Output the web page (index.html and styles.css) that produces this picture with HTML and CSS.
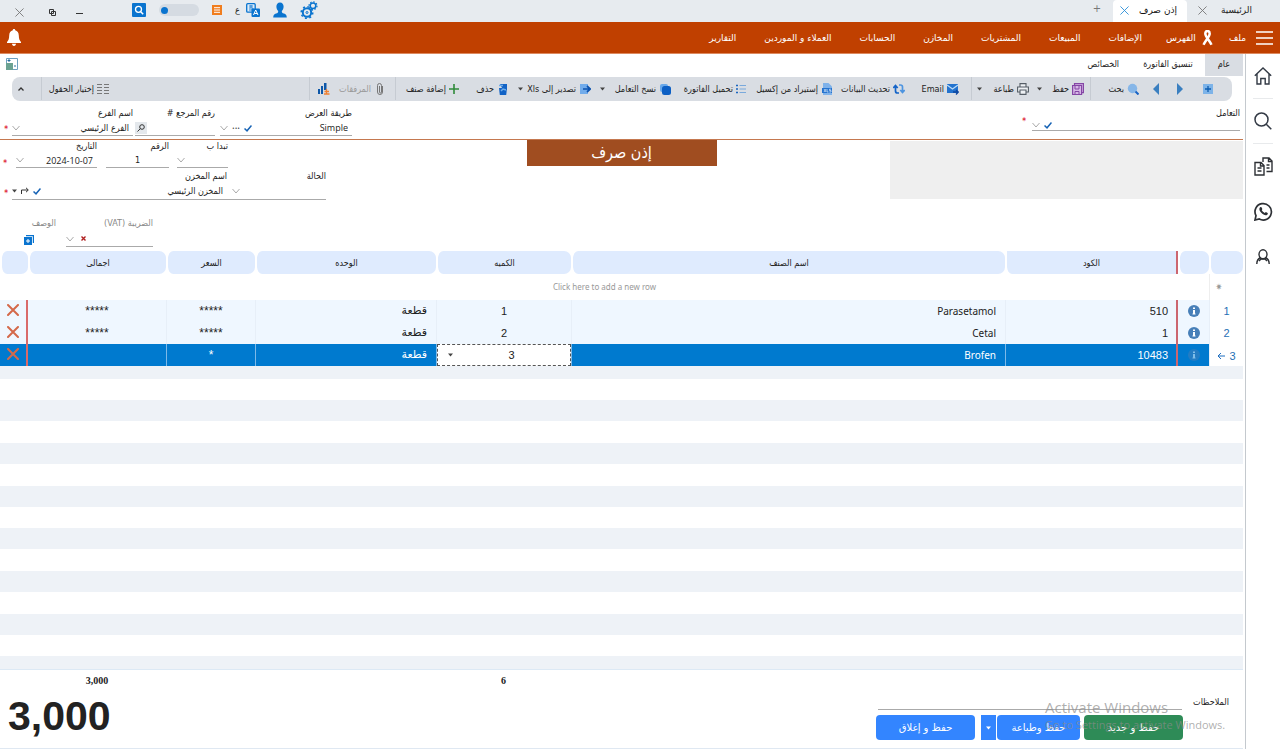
FILE: index.html
```html
<!DOCTYPE html>
<html lang="ar" dir="rtl">
<head>
<meta charset="utf-8">
<title>إذن صرف</title>
<link rel="stylesheet" href="styles.css">
</head>
<body>
<svg class="defs" aria-hidden="true">
  <symbol id="chev" viewBox="0 0 8 8"><path d="M.5 2 4 6l3.500-4" fill="none" stroke="#aaa"/></symbol>
  <symbol id="check" viewBox="0 0 8 8"><path d="M.5 4.500 3 6.800 7.500 1.500" fill="none" stroke="#1763b5" stroke-width="1.500"/></symbol>
  <symbol id="caret" viewBox="0 0 5 4"><path d="M0 .5h5L2.500 3.500z" fill="#444"/></symbol>
  <symbol id="x" viewBox="0 0 10 10"><path d="m.5.5 9 9m0-9-9 9" fill="none" stroke="currentColor"/></symbol>
  <symbol id="xbold" viewBox="0 0 5 5"><path d="m.5.5 4 4m0-4-4 4" fill="none" stroke="#b02020" stroke-width="1.400"/></symbol>
  <symbol id="del" viewBox="0 0 12 12"><path d="m1 1 10 10M11 1 1 11" fill="none" stroke="#d4694a" stroke-width="2" stroke-linecap="round"/></symbol>
  <symbol id="info" viewBox="0 0 12 12"><circle cx="6" cy="6" r="6" fill="currentColor"/><path d="M5 5h2v4H5zM5 2.500h2V4H5zM4.500 8.500h3v1h-3z" fill="#fff"/></symbol>
</svg>

<header class="titlebar">
  <nav class="doc-tabs">
    <div class="doc-tab"><span>الرئيسية</span><button class="plain gray" aria-label="إغلاق"><svg class="i9"><use href="#x"/></svg></button></div>
    <div class="doc-tab active"><span>إذن صرف</span><button class="plain blue" aria-label="إغلاق"><svg class="i9"><use href="#x"/></svg></button></div>
    <button class="plain new-tab" aria-label="جديد">+</button>
  </nav>
  <div class="title-tools">
    <button class="plain" aria-label="الإعدادات"><svg width="18" height="18" viewBox="0 0 18 18"><g fill="none" stroke="#0a74cf"><circle cx="7" cy="11.500" r="4.200" stroke-width="2"/><circle cx="7" cy="11.500" r="5.800" stroke-width="1.500" stroke-dasharray="2 2.500"/><circle cx="7" cy="11.500" r="1" /><circle cx="13" cy="4.800" r="2.800" stroke-width="1.500"/><circle cx="13" cy="4.800" r="4" stroke-width="1.200" stroke-dasharray="1.500 1.600"/></g></svg></button>
    <button class="plain" aria-label="المستخدم"><svg width="14" height="16" viewBox="0 0 14 16"><path d="M7 .5c2.300 0 3.600 1.700 3.600 4 0 2-.9 3.600-1.800 4.400 0 1.800.5 2.100 2.200 2.700 1.700.6 2.600 1.300 2.800 3.900H.2c.2-2.600 1.100-3.300 2.800-3.900 1.700-.6 2.200-.9 2.200-2.700C4.300 8.100 3.400 6.500 3.400 4.500c0-2.300 1.300-4 3.600-4z" fill="#0a74cf"/></svg></button>
    <button class="plain lang" aria-label="اللغة"><svg width="14" height="14" viewBox="0 0 14 14"><rect x=".7" y=".7" width="8.500" height="8.500" rx="1" fill="#dcebf8" stroke="#0a74cf" stroke-width="1.300"/><path d="M3 3h4M3 5h4v2H3M5 2v3" stroke="#0a74cf" stroke-width=".8" fill="none"/><rect x="5.500" y="5.500" width="8.500" height="8.500" rx="1" fill="#0a74cf"/><path d="m7.500 12 2.200-5 2.300 5M8.300 10.500h3" stroke="#fff" fill="none"/></svg><span>ع</span></button>
    <button class="plain" aria-label="قائمة"><svg width="10" height="10" viewBox="0 0 10 10"><path d="M0 0h10v10H0z" fill="#f07d1e"/><path d="M2 2.700h6M2 5h6M2 7.300h6" stroke="#fff"/></svg></button>
    <label class="toggle"><input type="checkbox" aria-label="الوضع"></label>
    <button class="plain" aria-label="بحث"><svg width="14" height="14" viewBox="0 0 14 14"><rect width="14" height="14" rx="1" fill="#0a74cf"/><circle cx="6.500" cy="6.300" r="3" fill="none" stroke="#fff" stroke-width="1.300"/><path d="m8.700 8.700 2.500 2.500" stroke="#fff" stroke-width="1.500"/></svg></button>
  </div>
  <div class="window-tools">
    <button class="plain" aria-label="تصغير"><svg width="7" height="9" viewBox="0 0 7 9"><path d="M0 5.500h7" stroke="#333"/></svg></button>
    <button class="plain" aria-label="استعادة"><svg width="7" height="7" viewBox="0 0 7 7"><path d="M.5.500h4v4h-4zM2.500 2.500h4v4h-4z" stroke="#333" fill="#e7ebef"/></svg></button>
    <button class="plain gray" aria-label="إغلاق"><svg class="i9"><use href="#x"/></svg></button>
  </div>
</header>

<nav class="menu">
  <button class="plain burger" aria-label="القائمة"><svg width="17" height="14" viewBox="0 0 17 14"><path d="M0 1h17M0 7h17M0 13h17" stroke="#fff" stroke-width="1.500"/></svg></button>
  <a href="#">ملف</a>
  <a href="#" class="with-icon"><svg width="13" height="16" viewBox="0 0 13 16"><path d="M4.300 3.800C4.300 1.800 5.300 1 6.500 1s2.200.8 2.200 2.800c0 2.700-3.500 5.600-6.200 11M4.300 3.800c0 2.700 3.500 5.600 6.200 11" stroke="#fff" stroke-width="2.500" fill="none"/></svg><span>الفهرس</span></a>
  <a href="#">الإضافات</a><a href="#">المبيعات</a><a href="#">المشتريات</a><a href="#">المخازن</a><a href="#">الحسابات</a><a href="#">العملاء و الموردين</a><a href="#">التقارير</a>
  <button class="plain bell" aria-label="التنبيهات"><svg width="14" height="17" viewBox="0 0 14 17"><path d="M7 0c.8 0 1.200.5 1.200 1.300 2.300.6 3.500 2.400 3.600 5.200.1 3.700.7 5 2.200 6.500v1H0v-1c1.500-1.500 2.100-2.800 2.200-6.500.1-2.800 1.300-4.600 3.600-5.200C5.800.5 6.200 0 7 0zM5 14.800h4C9 16 8.200 17 7 17s-2-1-2-2.200z" fill="#fff"/></svg></button>
</nav>

<div class="workspace">
  <aside class="rail">
    <button class="plain" aria-label="الرئيسية"><svg width="18" height="18" viewBox="0 0 18 18"><path d="M.8 8.800 9 1l8.200 7.800M3 7v10h3.800v-5.500h4.400V17H15V7" fill="none" stroke="#333a45" stroke-width="1.400"/></svg></button>
    <button class="plain" aria-label="بحث"><svg width="18" height="18" viewBox="0 0 18 18"><circle cx="7.500" cy="7.500" r="6.500" fill="none" stroke="#333a45" stroke-width="1.500"/><path d="m12.300 12.300 5 5" stroke="#333a45" stroke-width="1.500"/></svg></button>
    <button class="plain" aria-label="نسخ"><svg width="19" height="19" viewBox="0 0 19 19"><g fill="none" stroke="#2d3035" stroke-width="1.400"><path d="M1 5.500h6l3 3V18H1zM6.500 5.500V9H10M3.500 11h4M3.500 14h4M9 5V1h6l3 3v10.500h-5.500M14.500 1v3.500H18M12.500 8h3M12.500 11h3"/></g></svg></button>
    <button class="plain" aria-label="واتساب"><svg width="19" height="19" viewBox="0 0 19 19"><path d="M1 18l1-4.300A8.200 8.200 0 1 1 5.300 17z" fill="none" stroke="#2d3035" stroke-width="1.700"/><path d="M6.200 5.200c.8-.6 1.300-.2 1.600.6l.5 1.200c.1.400-.6 1-.5 1.300.7 1.300 1.500 2 2.900 2.600.4.100.8-.9 1.200-.8l1.700.8c.5.300.1 1.400-.4 1.800-1.300 1-3.200.4-4.900-.9-1.700-1.400-3.300-3.400-2.900-5.200.1-.6.400-1.100.8-1.400z" fill="#2d3035"/></svg></button>
    <button class="plain" aria-label="الحساب"><svg width="14" height="16" viewBox="0 0 14 16"><g fill="none" stroke="#2d3035" stroke-width="1.400"><ellipse cx="7" cy="5.300" rx="4" ry="4.500"/><path d="M4.500 8.500C2.500 9.500.8 11.500.8 15M9.500 8.500c2 1 3.700 3 3.700 6.500M3 12l2-2h4l2 2"/></g></svg></button>
  </aside>

  <main class="page">
    <nav class="ribbon-tabs">
      <a href="#" class="active">عام</a><a href="#">تنسيق الفاتورة</a><a href="#">الخصائص</a>
      <button class="plain layout-btn" aria-label="التخطيط"><svg width="12" height="12" viewBox="0 0 12 12"><path d="M.5.500h11v11H.5z" fill="#fff" stroke="#6fa0c0"/><path d="M0 5h7v7H0z" fill="#6ba292"/><path d="M3 1v3M1.500 2.500h3M8 8h2" stroke="#2a6f9e"/></svg></button>
    </nav>

    <div class="toolbar">
      <button class="tool" aria-label="جديد"><svg class="i10" viewBox="0 0 10 10"><path d="M0 0h10v10H0z" fill="#7db3e8"/><path d="M5 2v6M2 5h6" stroke="#0d5cb0" stroke-width="1.300"/></svg></button>
      <button class="tool" aria-label="السابق"><svg width="6" height="12" viewBox="0 0 6 12"><path d="m0 0 6 6-6 6z" fill="#3a7fc0"/></svg></button>
      <button class="tool" aria-label="التالي"><svg width="6" height="12" viewBox="0 0 6 12"><path d="M6 0 0 6l6 6z" fill="#3a7fc0"/></svg></button>
      <button class="tool"><svg class="i12" viewBox="0 0 12 12"><circle cx="5.500" cy="5.500" r="4.700" fill="#86b6e8"/><path d="m8.500 8.500 3 3" stroke="#1763c5" stroke-width="2"/></svg><span>بحث</span></button>
      <i class="sep"></i>
      <button class="tool"><svg class="i12" viewBox="0 0 12 12"><path d="M2.500 2V.6h9v9H10M.6 2.500h9v9h-9z" fill="#d6b7e6" stroke="#8446a5" stroke-width="1.200"/><path d="M3 2.500v3.500h4V2.500M3 11V8.500h4V11" fill="none" stroke="#8446a5"/></svg><span>حفظ</span></button>
      <button class="tool" aria-label="خيارات الحفظ"><svg class="car"><use href="#caret"/></svg></button>
      <button class="tool"><svg class="i12" viewBox="0 0 12 12"><path d="M3 4V.6h6V4M3 9H.6V4h10.800v5H9M3 7h6v4.400H3z" fill="#eef1f4" stroke="#555d66" stroke-width="1.100"/></svg><span>طباعة</span></button>
      <button class="tool" aria-label="خيارات الطباعة"><svg class="car"><use href="#caret"/></svg></button>
      <i class="sep"></i>
      <button class="tool"><svg class="i12" viewBox="0 0 12 12"><path d="M0 1h11v9H0z" fill="#2373cf"/><path d="m0 2 5.500 4L11 2" stroke="#bcdcf7" fill="none" stroke-width="1.300"/><path d="M6 9h5M9 7l2.300 2L9 11.500" stroke="#0d47a1" fill="none" stroke-width="1.300"/></svg><span>Email</span></button>
      <button class="tool"><svg class="i12" viewBox="0 0 12 12"><g fill="none" stroke-width="1.700"><path d="M2.500 3v5A2 2 0 0 0 4.500 10H6M.3 5 2.500 2.500 4.700 5" stroke="#1464c8"/><path d="M9.500 9V4A2 2 0 0 0 7.500 2H6M7.300 7l2.200 2.500L11.700 7" stroke="#4d94e0"/></g></svg><span>تحديث البيانات</span></button>
      <button class="tool"><svg class="i12" viewBox="0 0 12 12"><path d="M2 0h5.500L11 3.500V12H2z" fill="#7fb2ea"/><path d="M1 5h10v5H1z" fill="#2573cf"/><path d="m3 6 2 3m0-3L3 9m3-3v3h1.500M10 6.200H8.500v1.300H10V9H8.300" stroke="#dcebfa" stroke-width=".7" fill="none"/></svg><span>إستيراد من إكسيل</span></button>
      <button class="tool"><svg class="i10" viewBox="0 0 10 10"><path d="M3.500 1.500H10M3.500 5H10M3.500 8.500H10" stroke="#79a9dc"/><path d="M0 1.500h2M0 5h2M0 8.500h2" stroke="#1a66c0" stroke-width="1.600"/></svg><span>تحميل الفاتورة</span></button>
      <button class="tool"><svg class="i12" viewBox="0 0 12 12"><rect x="1" y="1" width="8" height="8" rx="2" fill="#6aa9ea"/><rect x="3" y="3" width="9" height="9" rx="2.500" fill="#0c5fc4"/></svg><span>نسخ التعامل</span></button>
      <button class="tool" aria-label="خيارات النسخ"><svg class="car"><use href="#caret"/></svg></button>
      <button class="tool"><svg class="i12" viewBox="0 0 12 12"><path d="M1 1h8v10H1z" fill="#72aceb"/><path d="M4 6h7M8 3l3.300 3L8 9" stroke="#0c52ae" stroke-width="1.700" fill="none"/></svg><span>تصدير إلى Xls</span></button>
      <button class="tool" aria-label="خيارات التصدير"><svg class="car"><use href="#caret"/></svg></button>
      <button class="tool"><svg class="i12" viewBox="0 0 12 12"><path d="M2 5h8l-.8 7H2.800z" fill="#1263c6"/><path d="M3 1h7v6H6z" fill="#1263c6"/><path d="M2 2.500h4M4 8l2-2 3 1" stroke="#6dacea" stroke-width="1.500" fill="none"/></svg><span>حذف</span></button>
      <button class="tool"><svg class="i10" viewBox="0 0 10 10"><path d="M5 0v10M0 5h10" stroke="#2f8a3a" stroke-width="1.600"/></svg><span>إضافة صنف</span></button>
      <i class="sep"></i>
      <button class="tool muted"><svg class="i12" viewBox="0 0 12 12"><path d="M8.500 3v6a2.500 2.500 0 0 1-5 0V2.500a2 2 0 0 1 4 0V9a1 1 0 0 1-2 0V3" fill="none" stroke="#777"/></svg><span>المرفقات</span></button>
      <button class="tool" aria-label="إحصائيات"><svg class="i12" viewBox="0 0 12 12"><path d="M0 6h2v5H0zM3 3h2v8H3zM6 0h2.500v7H6z" fill="#0d57a8"/><path d="M6 11h5.500M8.500 6v5M6.500 8.500h4.500" stroke="#f08030" stroke-width="1.300"/></svg></button>
      <i class="sep"></i>
      <button class="tool end"><svg class="i12" viewBox="0 0 12 12"><path d="M0 1.500h5M7 1.500h5M0 4.500h5M7 4.500h5M0 7.500h5M7 7.500h5M0 10.500h5M7 10.500h5" stroke="#777" stroke-width="1.200"/></svg><span>إختيار الحقول</span></button>
      <i class="sep"></i>
      <button class="tool" aria-label="طي"><svg width="6" height="4" viewBox="0 0 6 4"><path d="M.5 3.500 3 1l2.500 2.500" stroke="#333" stroke-width="1.300" fill="none"/></svg></button>
    </div>

    <form class="head-fields">
      <div class="field f-party"><label for="party">التعامل</label><div class="box low"><input id="party"><svg class="i8"><use href="#check"/></svg><svg class="i8"><use href="#chev"/></svg></div></div>
      <b class="req">*</b>
      <span class="space"></span>
      <div class="field f-view"><label for="view">طريقة العرض</label><div class="box"><select id="view" class="sans"><option>Simple</option></select><svg class="i8"><use href="#check"/></svg><span class="dots">•••</span><svg class="i8"><use href="#chev"/></svg></div></div>
      <div class="field f-ref"><label for="ref">رقم المرجع #</label><div class="box"><input id="ref"><button type="button" class="plain look" aria-label="بحث"><svg class="i8" viewBox="0 0 8 8"><circle cx="5" cy="3" r="2.300" fill="none" stroke="#333"/><path d="M3.300 4.700.5 7.500" stroke="#333"/></svg></button></div></div>
      <div class="field f-branch"><label for="branch">اسم الفرع</label><div class="box"><select id="branch"><option>الفرع الرئيسي</option></select><svg class="i8"><use href="#chev"/></svg></div></div>
      <b class="req">*</b>
    </form>

    <form class="doc-fields">
      <div class="party-card"></div>
      <h1>إذن صرف</h1>
      <div class="doc-rows">
        <div class="frow indent">
          <div class="field f-prefix"><label for="prefix">تبدا ب</label><div class="box"><input id="prefix"><svg class="i8"><use href="#chev"/></svg></div></div>
          <div class="field f-no"><label for="no">الرقم</label><div class="box"><input id="no" class="mid" value="1"></div></div>
          <div class="field f-date"><label for="date">التاريخ</label><div class="box"><input id="date" class="sans" dir="ltr" value="2024-10-07"><svg class="i8"><use href="#chev"/></svg></div></div>
          <b class="req">*</b>
        </div>
        <div class="frow">
          <div class="field f-state"><label for="state">الحالة</label><div class="box"><input id="state"><svg class="i8"><use href="#chev"/></svg></div></div>
          <div class="field f-store"><label for="store">اسم المخزن</label><div class="box"><select id="store"><option>المخزن الرئيسي</option></select><svg class="i8"><use href="#check"/></svg><svg class="i8" viewBox="0 0 8 8"><path d="M.5 7V3H7M5 .8 7.300 3 5 5.200" fill="none" stroke="#333"/></svg><svg class="car"><use href="#caret"/></svg></div></div>
          <b class="req">*</b>
        </div>
      </div>
    </form>

    <form class="tax-fields">
      <div class="field f-vat"><label for="vat">الضريبة (VAT)</label><div class="box"><input id="vat"><svg class="i5"><use href="#xbold"/></svg><svg class="i8"><use href="#chev"/></svg></div></div>
      <div class="field f-desc"><label for="desc">الوصف</label><button id="desc" type="button" class="plain"><svg width="10" height="10" viewBox="0 0 10 10"><path d="M2 .6h7.400V8" fill="none" stroke="#0a74cf" stroke-width="1.200"/><path d="M0 2h8v8H0z" fill="#0a74cf"/><path d="M4 4v4M2 6h4" stroke="#fff"/></svg></button></div>
    </form>

    <table class="grid">
      <colgroup><col class="c-num"><col class="c-info"><col class="c-code"><col><col class="c-qty"><col class="c-unit"><col class="c-price"><col class="c-total"><col class="c-del"></colgroup>
      <thead><tr><th></th><th></th><th class="bar">الكود</th><th>اسم الصنف</th><th>الكميه</th><th>الوحده</th><th>السعر</th><th>اجمالى</th><th></th></tr></thead>
      <tbody>
        <tr class="new"><td class="star">✷</td><td colspan="8"><span>Click here to add a new row</span></td></tr>
        <tr><td class="num">1</td><td class="plain-edge"><svg class="i12 info"><use href="#info"/></svg></td><td class="code bar">510</td><td class="name">Parasetamol</td><td class="qty">1</td><td class="unit">قطعة</td><td class="mask">*****</td><td class="mask plain-edge">*****</td><td class="rem"><button class="plain" aria-label="حذف"><svg class="i12"><use href="#del"/></svg></button></td></tr>
        <tr><td class="num">2</td><td class="plain-edge"><svg class="i12 info"><use href="#info"/></svg></td><td class="code bar">1</td><td class="name">Cetal</td><td class="qty">2</td><td class="unit">قطعة</td><td class="mask">*****</td><td class="mask plain-edge">*****</td><td class="rem"><button class="plain" aria-label="حذف"><svg class="i12"><use href="#del"/></svg></button></td></tr>
        <tr class="sel"><td class="num"><span>3</span><svg class="i8" viewBox="0 0 8 8"><path d="M8 4H1M4 1 1 4l3 3" stroke="#1f6fc0" fill="none"/></svg></td><td class="plain-edge"><svg class="i12 info"><use href="#info"/></svg></td><td class="code bar">10483</td><td class="name">Brofen</td><td class="edit"><div><input aria-label="الكميه" value="3"><svg class="car"><use href="#caret"/></svg></div></td><td class="unit">قطعة</td><td class="mask">*</td><td class="plain-edge"></td><td class="rem"><button class="plain" aria-label="حذف"><svg class="i12"><use href="#del"/></svg></button></td></tr>
      </tbody>
    </table>
    <div class="stripes"></div>

    <div class="sums"><span class="s-qty">6</span><span class="s-mid"></span><span class="s-total">3,000</span></div>
    <footer class="foot">
      <div class="actions">
        <div class="notes"><label for="notes">الملاحظات</label><input id="notes"></div>
        <div class="buttons">
          <button class="btn green">حفظ و جديد</button>
          <button class="btn print">حفظ وطباعة</button><button class="btn split" aria-label="خيارات"><svg class="car" viewBox="0 0 5 4"><path d="M0 .5h5L2.500 3.500z" fill="#fff"/></svg></button>
          <button class="btn close">حفظ و إغلاق</button>
        </div>
        <div class="watermark" dir="ltr"><p class="w1">Activate Windows</p><p class="w2">Go to Settings to activate Windows.</p></div>
      </div>
      <output class="grand">3,000</output>
    </footer>
  </main>
</div>
</body>
</html>
```
FILE: styles.css
```css
* { box-sizing: border-box; }
body {
  margin: 0;
  height: 100vh;
  display: flex;
  flex-direction: column;
  overflow: hidden;
  background: #fff;
  color: #222;
  font: 9px/12px "DejaVu Sans Condensed", "DejaVu Sans", sans-serif;
  white-space: nowrap;
}
.defs { position: absolute; width: 0; height: 0; }
svg { flex: none; display: block; }
a { color: inherit; text-decoration: none; }
button, input, select { font: inherit; color: inherit; }
.plain { border: 0; padding: 0; background: none; }
.gray { color: #777; }
.blue { color: #2a8fd8; }
.i5 { width: 5px; height: 5px; }
.i8 { width: 8px; height: 8px; }
.i9 { width: 9px; height: 9px; }
.i10 { width: 10px; height: 10px; }
.i12 { width: 12px; height: 12px; }
.car { width: 5px; height: 4px; }
.space { flex: 1; }
.box .sans { font-family: "Open Sans", sans-serif; }

/* title bar */
.titlebar { display: flex; flex: none; height: 22px; background: #e7ebef; }
.doc-tabs { display: flex; flex: 1; padding-right: 19px; font-family: "DejaVu Sans", sans-serif; }
.doc-tab { display: flex; align-items: center; justify-content: space-between; width: 74px; padding: 0 10px 2px 7px; }
.doc-tab:first-child { padding-right: 9px; padding-left: 10px; }
.doc-tab:first-child svg { margin-left: 1px; }
.doc-tab.active { background: #fff; color: #111; border-radius: 4px 4px 0 0; }
.new-tab { width: 32px; padding-bottom: 4px; color: #777; font-size: 10px; }
.title-tools { display: flex; align-items: center; gap: 13px; padding: 0 0 3px 49px; }
.lang { display: flex; align-items: center; gap: 6px; }
.toggle input { appearance: none; display: block; margin: 0; width: 40px; height: 12px; border-radius: 6px; background: #d5dbe2; }
.toggle { position: relative; }
.toggle::after { content: ""; position: absolute; left: 2px; top: 3px; width: 7px; height: 7px; border-radius: 50%; background: #0a74cf; }
.window-tools { display: flex; align-items: center; gap: 20px; padding: 2px 0 0 15px; }
.window-tools .gray { margin-right: 5px; }

/* main menu */
.menu { display: flex; flex: none; align-items: center; gap: 28px; height: 32px; padding: 0 7px; background: #c04000; border-bottom: 1px solid #dd8a60; color: #fff; font-family: "DejaVu Sans", sans-serif; }
.menu a:nth-child(2) { margin-right: -18px; }
.menu .with-icon { display: flex; align-items: center; gap: 5px; margin: 0 -13px 0 -4px; }
.bell { margin-right: auto; }

.workspace { display: flex; flex: 1; min-height: 0; }
.rail { display: flex; flex: none; flex-direction: column; align-items: center; width: 35px; border-left: 1px solid #c4c9ce; }
.rail button { display: flex; align-items: center; justify-content: center; width: 20px; height: 45px; }
.rail button:nth-child(-n+2) { border-bottom: 1px solid #e8eaec; }
.page { display: flex; flex: 1; flex-direction: column; min-width: 0; padding-right: 2px; }

.ribbon-tabs { display: flex; flex: none; height: 22px; margin-bottom: 1px; }
.ribbon-tabs a { display: flex; align-items: center; padding: 0 12px 2px; }
.ribbon-tabs .active { padding: 0 13px 2px; background: #d9dde3; }
.layout-btn { margin: 0 auto 2px 6px; }

.toolbar {
  display: grid;
  grid-template-columns: 30px 24px 20px 48px 7px 42px 13px 47px 10px 13px 54px 72px 87px 75px 66px 14px 68px 14px 50px 63px 10px 56px 20px minmax(133px, 1fr) 67px 18px 12px;
  flex: none;
  height: 24px;
  margin: 0 11px 0 12px;
  padding: 0 19px 1px 0;
  background: #d9dde3;
  border-radius: 8px;
}
.tool { display: flex; align-items: center; gap: 3px; min-width: 0; padding: 0; border: 0; background: none; }
.toolbar .muted { color: #999; }
.toolbar .sep { border-right: 1px solid #c6cbd2; }

/* document header */
.field { display: flex; flex: none; flex-direction: column; }
.field label { height: 12px; }
.box { display: flex; align-items: center; gap: 4px; height: 16px; margin-top: 2px; border-bottom: 1px solid #aaa; }
.box input, .box select { flex: 1; min-width: 0; width: 0; height: 14px; padding: 0 4px 0 0; border: 0; outline: 0; background: none; appearance: none; text-align: right; }
.box .mid { text-align: center; padding: 0; }
.req { align-self: flex-end; width: 12px; padding-right: 4px; color: #e03040; font-size: 8px; }
.dots { font-size: 5px; }
.head-fields { display: flex; flex: none; height: 39px; padding: 6px 3px 3px 0; border-bottom: 1px solid #c5784f; }
.box.low { height: 12px; margin-top: 0; }
.f-party { width: 208px; }
.f-party + .req { padding-right: 6px; align-self: center; }
.f-view { width: 132px; margin-left: 5px; }
.f-ref { width: 80px; margin-left: 2px; }
.f-branch { width: 121px; }
.look { padding: 2px; background: #e4e8ec; }

.doc-fields { display: flex; flex: none; justify-content: space-between; height: 60px; }
.party-card { flex: none; width: 353px; height: 58px; margin-top: 1px; background: #efefef; }
.doc-fields h1 { display: flex; flex: none; align-items: center; justify-content: center; width: 190px; height: 26px; margin: 0 0 0 8px; background: #a04d20; color: #fff; font-size: 16px; font-weight: 400; }
.doc-rows { width: 345px; }
.doc-rows .field label { height: 13px; }
.doc-rows .box { height: 15px; margin-top: 0; }
.frow { display: flex; padding-right: 19px; height: 30px; }
.frow.indent { padding-right: 117px; }
.f-prefix { width: 51px; margin-left: 8px; }
.f-no { width: 63px; margin-left: 9px; }
.f-date { width: 81px; margin-left: 5px; }
.f-state { width: 94px; }
.f-store { width: 220px; }
.doc-rows .f-state .box, .doc-rows .f-store .box { height: 17px; }
.f-store label { padding-right: 5px; }
.f-store .box select { padding-right: 9px; }

.tax-fields { display: flex; flex: none; justify-content: flex-end; height: 51px; padding: 17px 0 0 24px; color: #888; }
.f-vat { width: 87px; margin-left: 10px; }
.f-vat .box { gap: 7px; }
.f-desc { width: 32px; }
.f-desc button { align-self: flex-end; margin-top: 6px; }

/* item grid */
.grid { flex: none; width: 100%; table-layout: fixed; border-collapse: separate; border-spacing: 0; }
.c-num { width: 34px; } .c-info { width: 31px; } .c-code { width: 173px; } .c-qty { width: 135px; }
.c-unit { width: 181px; } .c-price { width: 89px; } .c-total { width: 138px; } .c-del { width: 28px; }
.grid th { height: 23px; padding: 0; background: #dfebfe; background-clip: padding-box; border-left: 2px solid #fff; border-radius: 7px; font-weight: 400; }
.grid th.bar { border-right: 2px solid #cc6670; border-radius: 0 0 0 7px; }
.grid td { height: 22px; padding: 0; background: #eff7ff; border-left: 1px solid #e7eff8; text-align: center; font-size: 10px; }
.grid td svg { margin: 0 auto; }
.grid td.plain-edge { border-left: 0; }
.grid .new td { height: 26px; background: #fff; color: #999; border-left: 0; }
.grid .new span { font-family: "Noto Sans", sans-serif; font-size: 8px; }
.grid .new .star { border-left: 1px solid #eee; padding-right: 15px; font-size: 9px; }
.grid td.num { background: #fff; color: #1f6fb5; font: 11px/12px "Liberation Sans", sans-serif; }
.sel .num span, .sel .num svg { display: inline-block; vertical-align: middle; margin: 0 2px; }
.grid td.bar { border-right: 2px solid #cc6670; }
.grid .code { padding-right: 8px; text-align: right; font: 11px/12px "Liberation Sans", sans-serif; }
.grid .name { padding-right: 9px; text-align: right; font-family: "Noto Sans", sans-serif; }
.grid .unit { padding-right: 9px; text-align: right; font: 11px/12px "DejaVu Sans", sans-serif; }
.grid .qty { font: 11px/12px "Liberation Sans", sans-serif; }
.grid .mask { font: 12px/12px "Liberation Sans", sans-serif; }
.grid .rem { border-right: 2px solid #d96a6a; border-left: 0; }
.info { color: #477fb8; }
.grid .sel td:not(.num) { background: #007acf; color: #fff; border-left-color: #7db9e8; }
.sel .info { opacity: 0.5; }
.grid .sel td.edit { background: #fff; color: #222; }
.edit div { display: flex; align-items: center; height: 22px; padding-left: 10px; border: 1px dashed #555; }
.edit input { flex: 1; width: 0; padding: 0; border: 0; outline: 0; text-align: center; font: 11px/12px "Liberation Sans", sans-serif; background: none; }
.stripes {
  flex: 1;
  min-height: 0;
  border-top: 13px solid #eef2f7;
  border-bottom: 1px solid #dce9f5;
  background: repeating-linear-gradient(#fff 0 21px, #eef2f7 21px 42px, #fff 42px 64px, #eef2f7 64px 85px, #fff 85px 107px, #eef2f7 107px 128px);
}

/* totals and actions */
.sums { display: flex; flex: none; justify-content: flex-end; height: 22px; padding: 5px 0 0 28px; font: bold 10px/12px "Liberation Serif", serif; text-align: center; }
.s-qty { width: 135px; }
.s-mid { width: 270px; }
.s-total { width: 138px; }
.foot { display: flex; flex: none; justify-content: space-between; height: 57px; border-bottom: 1px solid #dfe8f2; }
.actions { position: relative; width: 367px; }
.notes { display: flex; height: 18px; padding: 4px 14px 0 0; }
.notes label { width: 47px; }
.notes input { width: 304px; height: 14px; padding: 0; border: 0; border-bottom: 1px solid #aaa; outline: 0; }
.buttons { display: flex; margin-top: 5px; padding-right: 60px; }
.btn { height: 25px; padding: 0; border: 0; border-radius: 4px; background: #3385ff; color: #fff; font: 10px/12px "DejaVu Sans", sans-serif; }
.green { width: 99px; margin-left: 4px; background: #2e8b57; }
.print { width: 83px; margin-left: 1px; }
.split { width: 15px; margin-left: 6px; border-radius: 0; }
.split svg { margin: 0 auto; }
.close { width: 99px; }
.watermark { position: absolute; top: 5px; right: 18px; width: 180px; color: rgba(140, 140, 140, 0.7); font-family: "Open Sans", sans-serif; pointer-events: none; }
.watermark p { margin: 0; }
.w1 { font-size: 15px; line-height: 20px; }
.w2 { font-size: 11px; line-height: 15px; }
.grand { padding-left: 8px; font: bold 41px/48px "Liberation Sans", sans-serif; }
```
